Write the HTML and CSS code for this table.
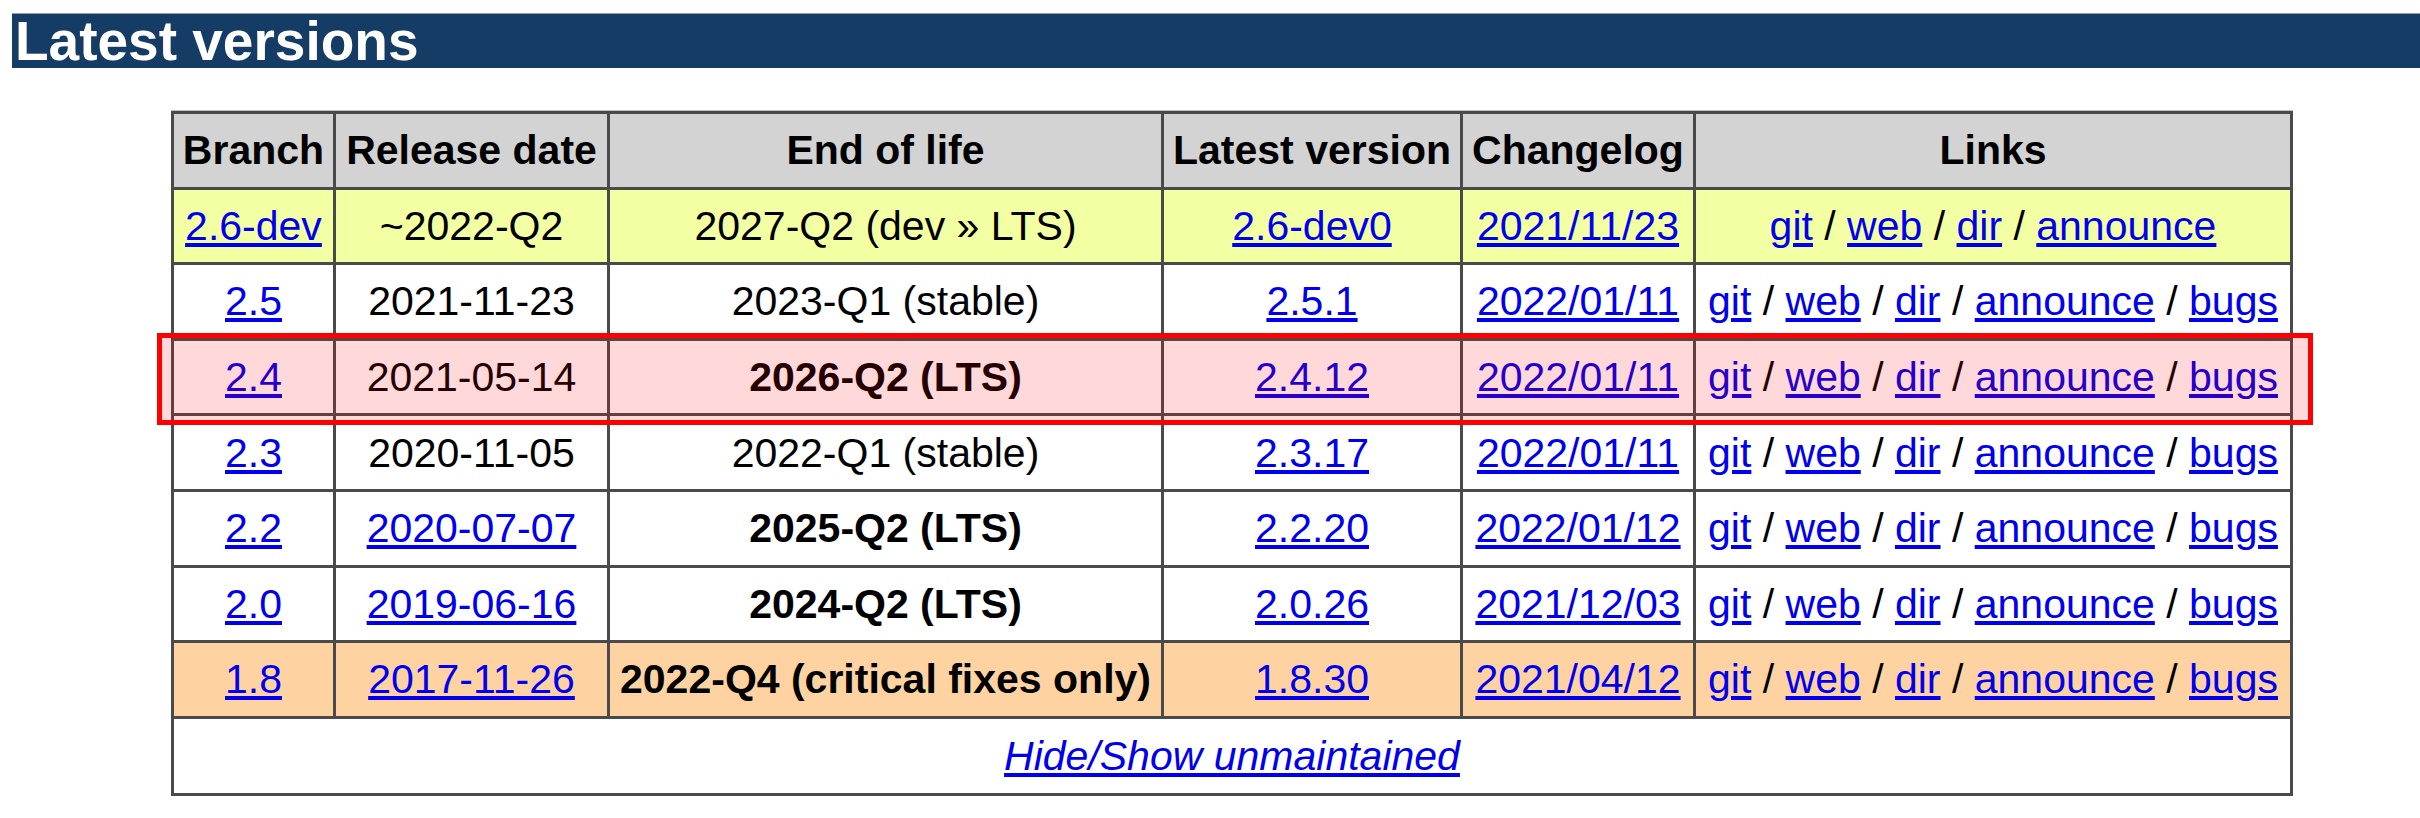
FILE: index.html
```html
<!DOCTYPE html>
<html>
<head>
<meta charset="utf-8">
<link rel="stylesheet" href="styles.css">
</head>
<body>
<h2 class="section-title">Latest versions</h2>
<div class="versions-wrap">
  <table class="versions">
    <colgroup>
      <col class="c-branch"><col class="c-date"><col class="c-eol"><col class="c-latest"><col class="c-log"><col class="c-links">
    </colgroup>
    <thead>
      <tr class="head">
        <th>Branch</th><th>Release date</th><th>End of life</th><th>Latest version</th><th>Changelog</th><th>Links</th>
      </tr>
    </thead>
    <tbody>
      <tr class="dev">
        <td><a href="#">2.6-dev</a></td><td>~2022-Q2</td><td>2027-Q2 (dev » LTS)</td><td><a href="#">2.6-dev0</a></td><td><a href="#">2021/11/23</a></td>
        <td><a href="#">git</a> / <a href="#">web</a> / <a href="#">dir</a> / <a href="#">announce</a></td>
      </tr>
      <tr>
        <td><a href="#">2.5</a></td><td>2021-11-23</td><td>2023-Q1 (stable)</td><td><a href="#">2.5.1</a></td><td><a href="#">2022/01/11</a></td>
        <td><a href="#">git</a> / <a href="#">web</a> / <a href="#">dir</a> / <a href="#">announce</a> / <a href="#">bugs</a></td>
      </tr>
      <tr>
        <td><a href="#">2.4</a></td><td>2021-05-14</td><td><b>2026-Q2 (LTS)</b></td><td><a href="#">2.4.12</a></td><td><a href="#">2022/01/11</a></td>
        <td><a href="#">git</a> / <a href="#">web</a> / <a href="#">dir</a> / <a href="#">announce</a> / <a href="#">bugs</a></td>
      </tr>
      <tr>
        <td><a href="#">2.3</a></td><td>2020-11-05</td><td>2022-Q1 (stable)</td><td><a href="#">2.3.17</a></td><td><a href="#">2022/01/11</a></td>
        <td><a href="#">git</a> / <a href="#">web</a> / <a href="#">dir</a> / <a href="#">announce</a> / <a href="#">bugs</a></td>
      </tr>
      <tr>
        <td><a href="#">2.2</a></td><td><a href="#">2020-07-07</a></td><td><b>2025-Q2 (LTS)</b></td><td><a href="#">2.2.20</a></td><td><a href="#">2022/01/12</a></td>
        <td><a href="#">git</a> / <a href="#">web</a> / <a href="#">dir</a> / <a href="#">announce</a> / <a href="#">bugs</a></td>
      </tr>
      <tr>
        <td><a href="#">2.0</a></td><td><a href="#">2019-06-16</a></td><td><b>2024-Q2 (LTS)</b></td><td><a href="#">2.0.26</a></td><td><a href="#">2021/12/03</a></td>
        <td><a href="#">git</a> / <a href="#">web</a> / <a href="#">dir</a> / <a href="#">announce</a> / <a href="#">bugs</a></td>
      </tr>
      <tr class="critical">
        <td><a href="#">1.8</a></td><td><a href="#">2017-11-26</a></td><td><b>2022-Q4 (critical fixes only)</b></td><td><a href="#">1.8.30</a></td><td><a href="#">2021/04/12</a></td>
        <td><a href="#">git</a> / <a href="#">web</a> / <a href="#">dir</a> / <a href="#">announce</a> / <a href="#">bugs</a></td>
      </tr>
      <tr>
        <td colspan="6" class="toggle"><a href="#"><i>Hide/Show unmaintained</i></a></td>
      </tr>
    </tbody>
  </table>
  <div class="highlight"></div>
</div>
</body>
</html>
```
FILE: styles.css
```css
html, body {
  margin: 0;
  padding: 0;
  background: #ffffff;
}

body {
  font-family: "Liberation Sans", Arial, sans-serif;
  color: #000000;
  overflow: hidden;
}

.section-title {
  margin: 13px 0 0 12px;
  padding: 0 0 0 3px;
  height: 55px;
  font-size: 55px;
  line-height: 55px;
  font-weight: bold;
  color: #ffffff;
  background: #143c65;
  border-top: 1px solid #8ea0b4;
  box-sizing: border-box;
}

.versions-wrap {
  position: relative;
  margin: 43px 0 0 171px;
  width: 2119px;
}

.versions {
  width: 2119px;
  table-layout: fixed;
  border-collapse: collapse;
  font-size: 41px;
  line-height: 46px;
  box-shadow: 0 -1px 0 #c2c2c2;
}

.c-branch { width: 162px; }
.c-date { width: 274px; }
.c-eol { width: 554px; }
.c-latest { width: 299px; }
.c-log { width: 233px; }
.c-links { width: 597px; }

.versions th,
.versions td {
  border: 3px solid #4a4a4a;
  padding: 13.3px 0;
  text-align: center;
  white-space: nowrap;
  overflow: hidden;
}

.versions th {
  font-weight: bold;
  background: #d3d3d3;
}

.versions tr.dev td {
  background: #f2ffa2;
}

.versions tr.critical td {
  background: #ffd3a1;
}

.versions a {
  color: #0000ee;
  text-decoration: underline;
}

.versions td.toggle {
  padding-top: 14px;
  padding-bottom: 14px;
}

.highlight {
  position: absolute;
  left: -14px;
  top: 222px;
  width: 2156px;
  height: 92px;
  box-sizing: border-box;
  border: 5px solid #ff0000;
  background: rgba(255, 0, 0, 0.15);
  pointer-events: none;
}
```
